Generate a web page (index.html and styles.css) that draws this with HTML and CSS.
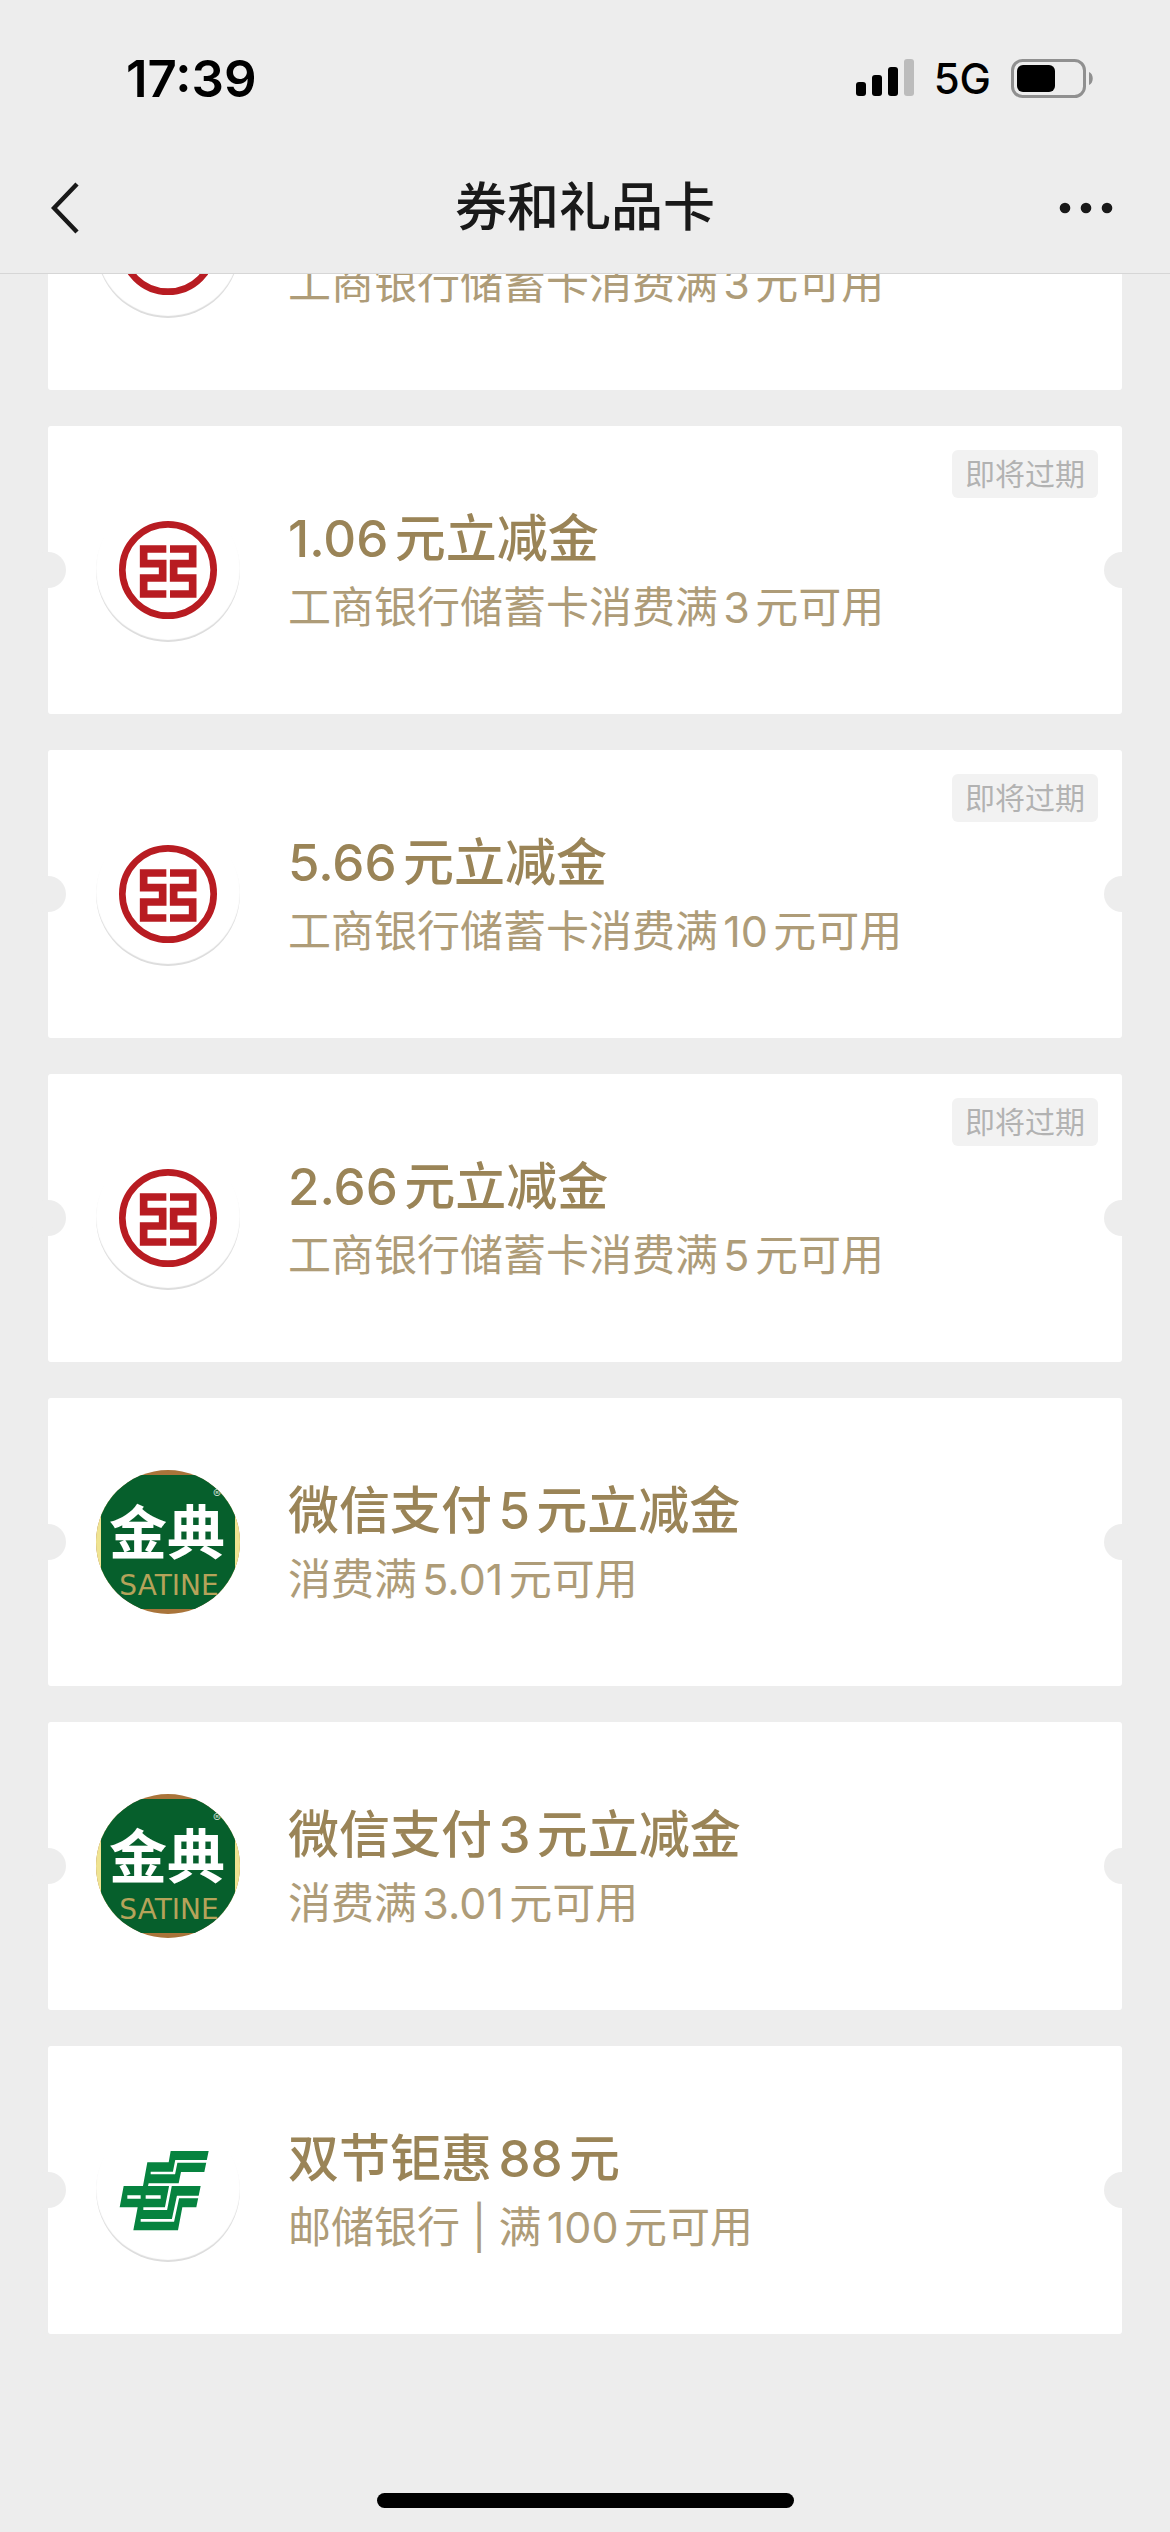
FILE: index.html
```html
<!DOCTYPE html>
<html lang="zh-CN">

<head>
    <meta charset="UTF-8">
    <meta name="viewport" content="width=device-width, initial-scale=1.0">
    <title>券和礼品卡</title>
    <link rel="stylesheet" href="styles.css">
</head>

<body>
    <!-- Shared bank logos -->
    <svg class="sprite" aria-hidden="true">
        <symbol id="icbc" viewBox="48 -6 432 432">
            <g fill="none" stroke="#b81c22">
                <circle cx="264" cy="210" r="137" stroke-width="20" />
                <path d="M259 147H191V191H248V234H191V282H259M270 147H338V191H281V234H338V282H270" stroke-width="23" />
            </g>
        </symbol>
        <symbol id="psbc" viewBox="48 54 432 432">
            <path fill="#06833f" d="M272 153H386L373 216H303L296 250H206L204 258H362L349 322H307L294 391H160L173 322H119L131 258H189L202 187H266Z" />
            <path fill="none" stroke="#fff" stroke-width="8" d="M386 184H289L282 219H212M272 254L258 326H190M360 291H294L279 361H182" />
            <path fill="none" stroke="#fff" stroke-width="10" d="M142 291H182M197 291H242" />
        </symbol>
    </svg>

    <header class="header">
        <div class="status">
            <span class="time">17:39</span>
            <div class="status-right">
                <svg class="signal" viewBox="0 0 58 38" aria-hidden="true">
                    <rect x="0" y="23" width="10" height="14" rx="3" />
                    <rect x="16" y="16" width="10" height="21" rx="3" />
                    <rect x="32" y="8" width="10" height="29" rx="3" />
                    <rect x="48" y="0" width="10" height="37" rx="3" fill="#bcbcbc" />
                </svg>
                <span class="network">5G</span>
                <svg class="battery" viewBox="0 0 83 39" aria-hidden="true">
                    <rect x="1.5" y="1.5" width="72" height="36" rx="10" fill="none" stroke="#909090" stroke-width="3" />
                    <rect x="6" y="6" width="38" height="27" rx="6" />
                    <path d="M78 13C83 15 83 24 78 26Z" fill="#909090" />
                </svg>
            </div>
        </div>
        <nav class="nav">
            <button class="nav-button" type="button" aria-label="返回">
                <svg width="32" height="54" viewBox="0 0 32 54">
                    <path d="M26 3L3 27L26 51" fill="none" stroke="#191919" stroke-width="4.5" />
                </svg>
            </button>
            <h1 class="nav-title">券和礼品卡</h1>
            <button class="nav-button more" type="button" aria-label="更多">
                <svg width="60" height="12" viewBox="0 0 60 12" fill="#191919">
                    <circle cx="6" cy="6" r="5.3" />
                    <circle cx="27" cy="6" r="5.3" />
                    <circle cx="48" cy="6" r="5.3" />
                </svg>
            </button>
        </nav>
    </header>

    <main class="list">
        <a class="card" href="#">
            <svg class="logo bank"><use href="#icbc" /></svg>
            <div class="info">
                <h2 class="name">1.06元立减金</h2>
                <p class="rule">工商银行储蓄卡消费满3元可用</p>
            </div>
        </a>
        <a class="card" href="#">
            <svg class="logo bank"><use href="#icbc" /></svg>
            <div class="info">
                <h2 class="name">1.06元立减金</h2>
                <p class="rule">工商银行储蓄卡消费满3元可用</p>
            </div>
            <span class="badge">即将过期</span>
        </a>
        <a class="card" href="#">
            <svg class="logo bank"><use href="#icbc" /></svg>
            <div class="info">
                <h2 class="name">5.66元立减金</h2>
                <p class="rule">工商银行储蓄卡消费满10元可用</p>
            </div>
            <span class="badge">即将过期</span>
        </a>
        <a class="card" href="#">
            <svg class="logo bank"><use href="#icbc" /></svg>
            <div class="info">
                <h2 class="name">2.66元立减金</h2>
                <p class="rule">工商银行储蓄卡消费满5元可用</p>
            </div>
            <span class="badge">即将过期</span>
        </a>
        <a class="card" href="#">
            <svg class="logo" viewBox="0 0 144 144">
                <rect width="144" height="144" fill="#a9743a" />
                <rect y="22" width="144" height="100" fill="#efe391" />
                <rect x="5" y="5" width="134" height="134" fill="#065f2c" />
                <text class="logo-name" x="71" y="84" text-anchor="middle">金典</text>
                <text class="logo-latin" x="73" y="125" text-anchor="middle">SATINE</text>
                <text class="logo-mark" x="121" y="28" text-anchor="middle">®</text>
            </svg>
            <div class="info">
                <h2 class="name">微信支付5元立减金</h2>
                <p class="rule">消费满5.01元可用</p>
            </div>
        </a>
        <a class="card" href="#">
            <svg class="logo" viewBox="0 0 144 144">
                <rect width="144" height="144" fill="#a9743a" />
                <rect y="22" width="144" height="100" fill="#efe391" />
                <rect x="5" y="5" width="134" height="134" fill="#065f2c" />
                <text class="logo-name" x="71" y="84" text-anchor="middle">金典</text>
                <text class="logo-latin" x="73" y="125" text-anchor="middle">SATINE</text>
                <text class="logo-mark" x="121" y="28" text-anchor="middle">®</text>
            </svg>
            <div class="info">
                <h2 class="name">微信支付3元立减金</h2>
                <p class="rule">消费满3.01元可用</p>
            </div>
        </a>
        <a class="card" href="#">
            <svg class="logo bank"><use href="#psbc" /></svg>
            <div class="info">
                <h2 class="name">双节钜惠88元</h2>
                <p class="rule">邮储银行 | 满100元可用</p>
            </div>
        </a>
    </main>

    <div class="home-bar"></div>
</body>

</html>
```

FILE: styles.css
```css
* {
    box-sizing: border-box;
    margin: 0;
    padding: 0;
}

body {
    font-family: Inter, "Noto Sans CJK SC", sans-serif;
    background: #ededed;
    color: #191919;
    text-autospace: normal;
}

.sprite {
    position: absolute;
    width: 0;
    height: 0;
}

/* Header */
.header {
    position: fixed;
    top: 0;
    left: 0;
    right: 0;
    z-index: 2;
    background: #ededed;
    border-bottom: 1px solid #d6d6d6;
}

.status {
    display: flex;
    justify-content: space-between;
    align-items: center;
    height: 142px;
    padding: 14px 76px 0 126px;
    color: #000;
}

.time {
    font-size: 51px;
    font-weight: 600;
}

.status-right {
    display: flex;
    align-items: center;
    gap: 20px;
}

.signal {
    width: 58px;
    height: 38px;
}

.network {
    font-size: 42px;
    font-weight: 500;
}

.battery {
    width: 83px;
    height: 39px;
}

.nav {
    display: grid;
    grid-template-columns: 1fr auto 1fr;
    align-items: center;
    height: 131px;
    padding: 0 51px;
}

.nav-button {
    display: flex;
    justify-self: start;
    border: none;
    background: none;
    cursor: pointer;
}

.nav-button.more {
    justify-self: end;
}

.nav-title {
    font-size: 52px;
    font-weight: 500;
    line-height: 72px;
}

/* Coupons */
.list {
    display: flex;
    flex-direction: column;
    gap: 36px;
    padding: 102px 48px 198px;
}

.card {
    position: relative;
    display: flex;
    align-items: center;
    gap: 48px;
    min-height: 288px;
    padding: 24px 48px;
    border-radius: 3px;
    background: #fff;
    text-decoration: none;
}

.card::before,
.card::after {
    content: "";
    position: absolute;
    top: 50%;
    width: 36px;
    height: 36px;
    margin-top: -18px;
    border-radius: 50%;
    background: #ededed;
}

.card::before {
    left: -18px;
}

.card::after {
    right: -18px;
}

.logo {
    flex: none;
    width: 144px;
    height: 144px;
    border-radius: 50%;
}

.logo.bank {
    box-shadow: inset 0 -2px 1px #dcdcdc;
}

.logo-name {
    font-family: "Noto Sans CJK SC", sans-serif;
    font-size: 58px;
    font-weight: 700;
    fill: #fff;
}

.logo-latin {
    font-family: "DejaVu Sans", sans-serif;
    font-size: 28px;
    fill: #b5a35a;
}

.logo-mark {
    font-size: 12px;
    fill: #c5dccb;
}

.info {
    padding-top: 2px;
}

.name {
    font-size: 51px;
    font-weight: 500;
    line-height: 72px;
    color: #9a8457;
}

.rule {
    font-size: 43px;
    line-height: 64px;
    color: #ae9c78;
}

.badge {
    position: absolute;
    top: 24px;
    right: 24px;
    padding: 0 13px;
    border-radius: 6px;
    background: #f2f2f2;
    font-size: 30px;
    line-height: 48px;
    color: #b2b2b2;
}

.home-bar {
    position: fixed;
    bottom: 24px;
    left: 0;
    right: 0;
    width: 417px;
    height: 15px;
    margin: 0 auto;
    border-radius: 8px;
    background: #000;
}
```
